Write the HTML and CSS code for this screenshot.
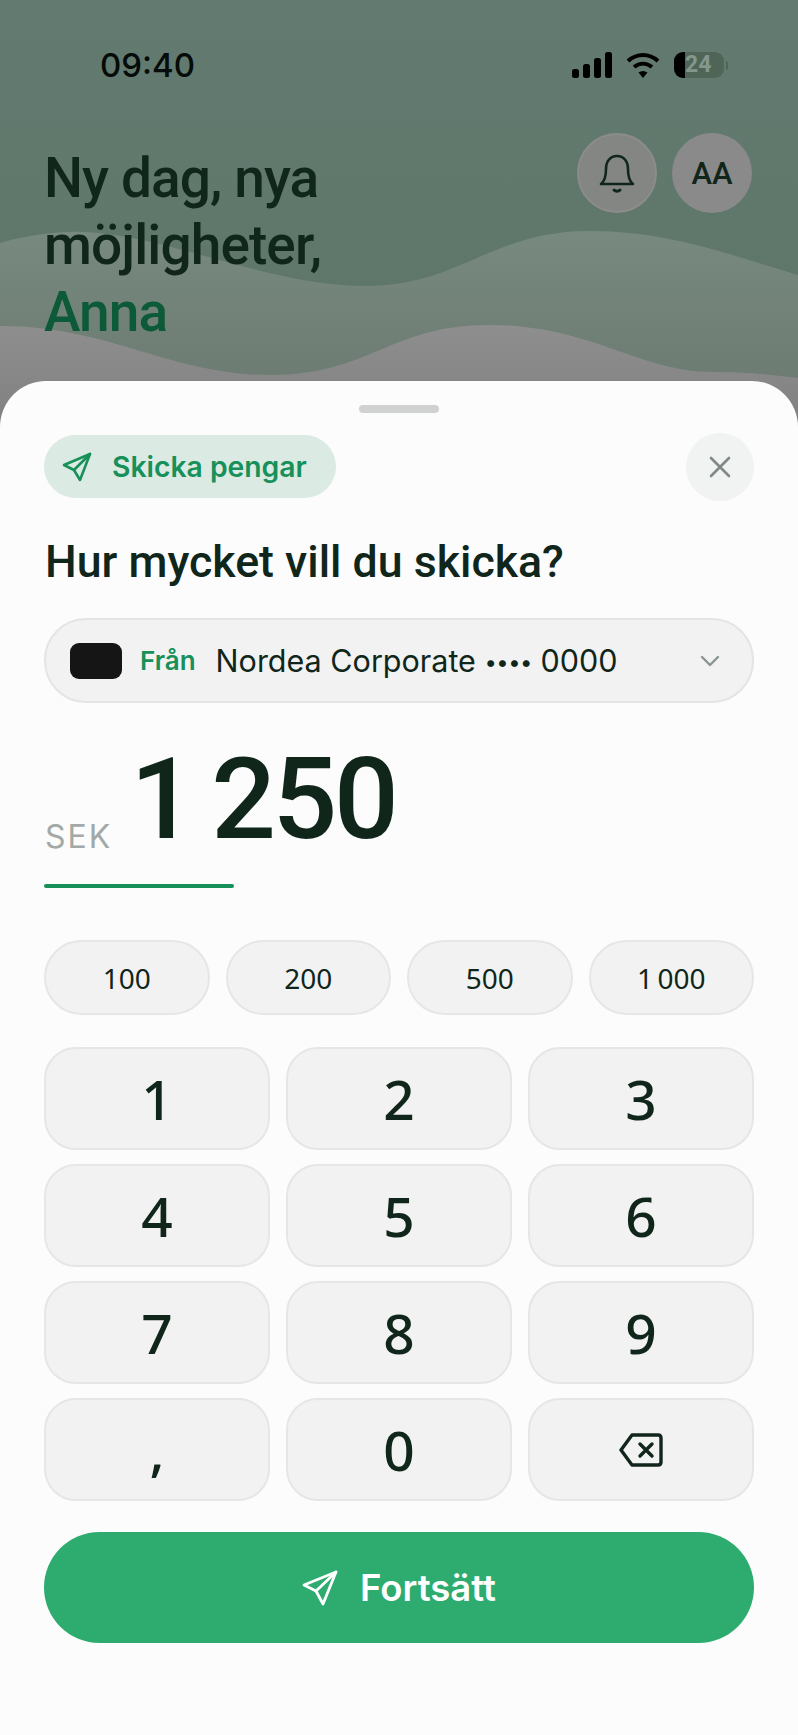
FILE: index.html
```html
<!DOCTYPE html>
<html lang="en">
<head>
    <meta charset="UTF-8">
    <meta name="viewport" content="width=device-width, initial-scale=1.0">
    <title>Skicka pengar</title>
    <link rel="stylesheet" href="styles.css">
</head>
<body>
    <div class="screen">
        <svg class="waves" width="798" height="460" viewBox="0 0 798 460">
            <defs>
                <linearGradient id="backWave" x1="0" y1="0" x2="0" y2="1">
                    <stop offset="0" stop-color="#78897f"/>
                    <stop offset="1" stop-color="#66756d"/>
                </linearGradient>
                <linearGradient id="frontWave" x1="0" y1="0" x2="0" y2="1">
                    <stop offset="0" stop-color="#8e8e8e"/>
                    <stop offset="1" stop-color="#7c7c7c"/>
                </linearGradient>
            </defs>
            <path fill="url(#backWave)" d="M0 243C30 235 55 231 85 232C170 236 270 286 366 286C460 286 490 231 590 231C670 231 730 255 798 275V460H0Z"/>
            <path fill="url(#frontWave)" d="M0 326C110 326 170 375 270 375C370 375 390 325 489 325C590 325 640 372 712 372C750 372 775 375 798 378V460H0Z"/>
        </svg>

        <div class="status">
            <span class="time">09:40</span>
            <div class="status-icons">
                <svg width="40" height="26" viewBox="0 0 40 26" fill="#000">
                    <rect x="0" y="17" width="7" height="9" rx="2.5"/>
                    <rect x="11" y="12" width="7" height="14" rx="2.5"/>
                    <rect x="22" y="6" width="7" height="20" rx="2.5"/>
                    <rect x="33" y="0" width="7" height="26" rx="2.5"/>
                </svg>
                <svg width="34" height="26" viewBox="0 0 34 26" fill="none" stroke="#000" stroke-width="4">
                    <path d="M2 9C11 1 23 1 32 9"/>
                    <path d="M8 15C13.500 10.500 20.500 10.500 26 15"/>
                    <path d="M12.500 20.500L17 26L21.500 20.500C18.500 18.500 15.500 18.500 12.500 20.500Z" fill="#000" stroke="none"/>
                </svg>
                <div class="battery"><span class="battery-fill"></span><span class="battery-num">24</span></div>
                <span class="battery-nub"></span>
            </div>
        </div>

        <div class="hero">
            <h1 class="greeting">Ny dag, nya<br>möjligheter,<br><span class="name">Anna</span></h1>
            <div class="hero-actions">
                <div class="round-btn bell">
                    <svg width="36" height="40" viewBox="0 0 36 40" fill="none" stroke="#10261b" stroke-width="2.600" stroke-linejoin="round" stroke-linecap="round">
                        <path d="M2 31C6 28 7 24 7 16C7 8 11.500 3 18 3C24.500 3 29 8 29 16C29 24 30 28 34 31Z"/>
                        <path d="M15 37C16.500 38.500 19.500 38.500 21 37" stroke-width="3"/>
                    </svg>
                </div>
                <div class="round-btn">AA</div>
            </div>
        </div>

        <div class="sheet">
            <div class="handle"></div>
            <div class="sheet-top">
                <div class="tag">
                    <svg width="30" height="30" viewBox="0 0 30 30" fill="none" stroke="#17905a" stroke-width="2.600" stroke-linejoin="round" stroke-linecap="round">
                        <path d="M28 2L2 13L12 18L18 28Z"/>
                        <path d="M28 2L12 18"/>
                    </svg>
                    <span>Skicka pengar</span>
                </div>
                <div class="close">
                    <svg width="22" height="22" viewBox="0 0 22 22" fill="none" stroke="#7f8a85" stroke-width="2.600" stroke-linecap="round">
                        <path d="M2 2L20 20M20 2L2 20"/>
                    </svg>
                </div>
            </div>

            <h2 class="question">Hur mycket vill du skicka?</h2>

            <div class="account">
                <span class="card-icon"></span>
                <span class="from">Från</span>
                <span class="account-name">Nordea Corporate <span class="dots">••••</span> 0000</span>
                <svg class="chevron" width="20" height="12" viewBox="0 0 20 12" fill="none" stroke="#8a9590" stroke-width="2.400" stroke-linecap="round" stroke-linejoin="round">
                    <path d="M2 2L10 10L18 2"/>
                </svg>
            </div>

            <div class="amount">
                <span class="currency">SEK</span>
                <span class="value">1&thinsp;250</span>
            </div>
            <div class="amount-line"></div>

            <div class="chips">
                <div class="chip">100</div>
                <div class="chip">200</div>
                <div class="chip">500</div>
                <div class="chip">1&thinsp;000</div>
            </div>

            <div class="keypad">
                <div class="key">1</div>
                <div class="key">2</div>
                <div class="key">3</div>
                <div class="key">4</div>
                <div class="key">5</div>
                <div class="key">6</div>
                <div class="key">7</div>
                <div class="key">8</div>
                <div class="key">9</div>
                <div class="key">,</div>
                <div class="key">0</div>
                <div class="key">
                    <svg width="44" height="34" viewBox="0 0 44 34" fill="none" stroke="#10261b" stroke-width="3.400" stroke-linejoin="round" stroke-linecap="round">
                        <path d="M13 2H39C41 2 42 3 42 5V29C42 31 41 32 39 32H13L2 17Z"/>
                        <path d="M21 11L33 23M33 11L21 23"/>
                    </svg>
                </div>
            </div>

            <div class="submit">
                <svg width="36" height="36" viewBox="0 0 36 36" fill="none" stroke="#fff" stroke-width="2.800" stroke-linejoin="round" stroke-linecap="round">
                    <path d="M34 2L2 15L14 21L21 34Z"/>
                    <path d="M34 2L14 21"/>
                </svg>
                <span>Fortsätt</span>
            </div>
        </div>
    </div>
</body>
</html>
```

FILE: styles.css
```css
html, body {
    margin: 0;
    padding: 0;
}
.screen {
    background: linear-gradient(#637a70, #5f776b 280px);
    color: #10261b;
    font-family: Inter, sans-serif;
    height: 1735px;
    overflow: hidden;
    position: relative;
    width: 798px;
}
.waves {
    left: 0;
    position: absolute;
    top: 0;
}
.status {
    align-items: center;
    display: flex;
    height: 26px;
    justify-content: space-between;
    padding: 52px 70px 0 100px;
    position: relative;
}
.time {
    color: #050b08;
    font-size: 33px;
    font-weight: 500;
}
.status-icons {
    align-items: center;
    display: flex;
}
.status-icons svg {
    margin-right: 14px;
}
.battery {
    background: #4e6558;
    border-radius: 9px;
    height: 26px;
    overflow: hidden;
    position: relative;
    width: 50px;
}
.battery-fill {
    background: #000;
    display: block;
    height: 100%;
    width: 11px;
}
.battery-num {
    color: #84978c;
    font-family: Roboto, sans-serif;
    font-size: 23px;
    font-weight: 700;
    left: 11px;
    line-height: 26px;
    position: absolute;
    top: 0;
}
.battery-nub {
    background: #4e6558;
    border-radius: 0 3px 3px 0;
    height: 9px;
    margin-left: 2px;
    width: 2px;
}
.hero {
    display: flex;
    justify-content: space-between;
    padding: 55px 46px 0 44px;
    position: relative;
}
.greeting {
    font-family: Roboto, sans-serif;
    font-size: 55px;
    font-weight: 500;
    letter-spacing: -0.9px;
    line-height: 67px;
    margin: 12px 0 0 0;
}
.name {
    color: #0c5a37;
}
.hero-actions {
    display: flex;
    gap: 15px;
}
.round-btn {
    align-items: center;
    background: #8a8a8a;
    border-radius: 50%;
    display: flex;
    font-family: Roboto, sans-serif;
    font-size: 31px;
    font-weight: 500;
    height: 80px;
    justify-content: center;
    width: 80px;
}
.bell {
    background: #848684;
    border: 2px solid #8b8c8b;
    box-sizing: border-box;
}
.sheet {
    background: #fbfcfb;
    border-radius: 46px 46px 0 0;
    box-sizing: border-box;
    height: 1354px;
    left: 0;
    padding: 24px 44px 0 44px;
    position: absolute;
    top: 381px;
    width: 798px;
}
.handle {
    background: #d0d2d1;
    border-radius: 4px;
    height: 8px;
    margin: 0 auto;
    width: 80px;
}
.sheet-top {
    align-items: center;
    display: flex;
    justify-content: space-between;
    margin-top: 20px;
}
.tag {
    align-items: center;
    background: #dbeae2;
    border-radius: 32px;
    color: #17905a;
    display: flex;
    font-size: 28.300px;
    font-weight: 600;
    gap: 20px;
    height: 63px;
    margin-top: -1px;
    padding: 0 29px 0 18px;
}
.close {
    align-items: center;
    background: #f1f2f2;
    border-radius: 50%;
    display: flex;
    height: 68px;
    justify-content: center;
    width: 68px;
}
.question {
    font-family: Roboto, sans-serif;
    font-size: 44.700px;
    font-weight: 500;
    line-height: 56px;
    margin: 33px 0 0 1px;
}
.account {
    align-items: center;
    background: #f2f2f2;
    border: 2px solid #e3e5e4;
    border-radius: 42px;
    box-sizing: border-box;
    display: flex;
    height: 85px;
    margin-top: 28px;
    padding: 0 32px 0 24px;
}
.card-icon {
    background: #151515;
    border-radius: 9px;
    height: 36px;
    width: 52px;
}
.from {
    color: #17905a;
    font-size: 26px;
    font-weight: 600;
    margin-left: 18px;
}
.account-name {
    font-size: 30.500px;
    margin-left: 20px;
}
.dots {
    font-size: 22px;
    letter-spacing: -0.5px;
    vertical-align: 2px;
}
.chevron {
    margin-left: auto;
}
.amount {
    align-items: flex-end;
    display: flex;
    height: 150px;
}
.currency {
    color: #a2a9a6;
    font-size: 32px;
    letter-spacing: 2px;
    line-height: 40px;
    margin: 0 18px -4px 1px;
}
.value {
    font-family: Roboto, sans-serif;
    font-size: 114px;
    font-weight: 500;
    letter-spacing: -3.5px;
    line-height: 150px;
    margin-bottom: -21px;
}
.amount-line {
    background: #17905a;
    border-radius: 2px;
    height: 4px;
    margin-top: 31px;
    width: 190px;
}
.chips {
    display: grid;
    gap: 16px;
    grid-template-columns: repeat(4, 1fr);
    margin-top: 52px;
}
.chip {
    align-items: center;
    background: #f2f2f2;
    border: 2px solid #e5e7e6;
    border-radius: 38px;
    box-sizing: border-box;
    display: flex;
    font-family: "Noto Sans", sans-serif;
    font-size: 28px;
    height: 75px;
    justify-content: center;
}
.keypad {
    display: grid;
    gap: 14px 16px;
    grid-template-columns: repeat(3, 1fr);
    margin-top: 32px;
}
.key {
    align-items: center;
    background: #f2f2f2;
    border: 2px solid #e5e7e6;
    border-radius: 32px;
    box-sizing: border-box;
    display: flex;
    font-family: "Noto Sans", sans-serif;
    font-size: 55px;
    font-weight: 500;
    height: 103px;
    justify-content: center;
}
.submit {
    align-items: center;
    background: #2eac6f;
    border-radius: 56px;
    color: #fff;
    display: flex;
    font-size: 36.500px;
    font-weight: 600;
    gap: 22px;
    height: 111px;
    justify-content: center;
    margin-top: 31px;
}
```
